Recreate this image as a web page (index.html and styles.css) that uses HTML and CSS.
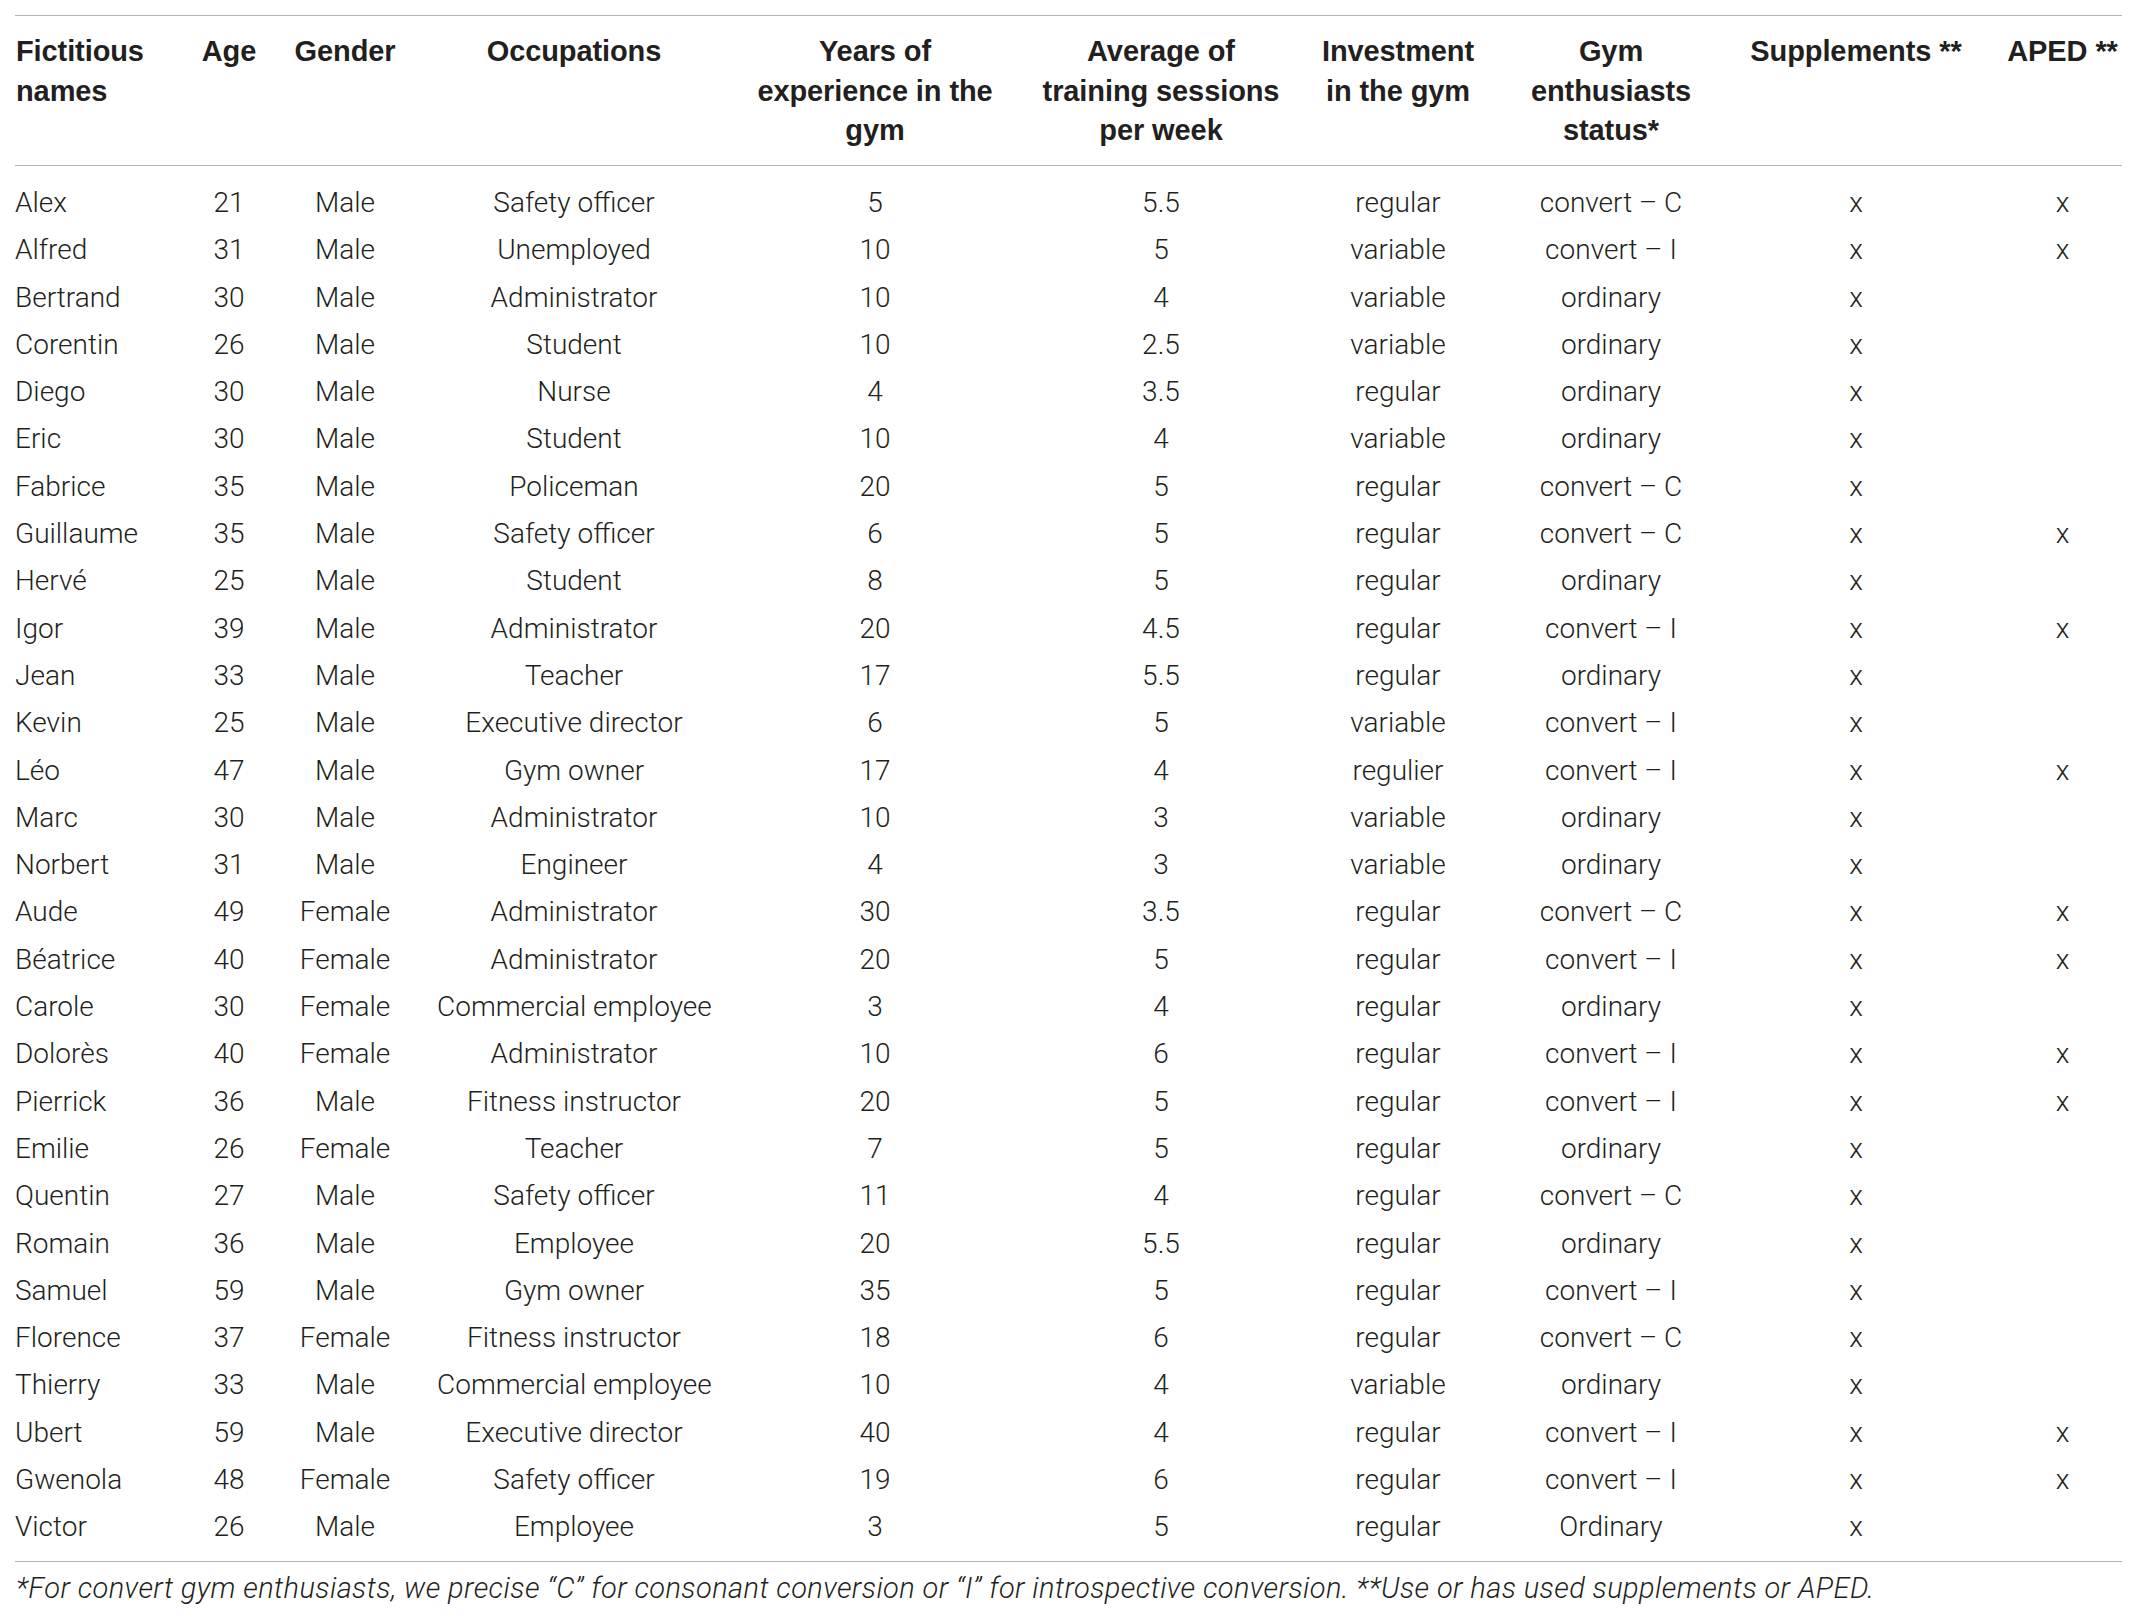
FILE: index.html
```html
<!DOCTYPE html>
<html lang="en">
<head>
<meta charset="utf-8">
<title>Participants</title>
<link rel="stylesheet" href="styles.css">
</head>
<body>
<div class="page">
<table class="data">
<colgroup>
<col class="c-name"><col class="c-age"><col class="c-gender"><col class="c-occ"><col class="c-years"><col class="c-avg"><col class="c-inv"><col class="c-status"><col class="c-supp"><col class="c-aped">
</colgroup>
<thead>
<tr>
<th class="left">Fictitious<br>names</th>
<th><div class="wide">Age</div></th>
<th>Gender</th>
<th>Occupations</th>
<th>Years of<br>experience in the<br>gym</th>
<th>Average of<br>training sessions<br>per week</th>
<th>Investment<br>in the gym</th>
<th>Gym<br>enthusiasts<br>status*</th>
<th>Supplements **</th>
<th>APED **</th>
</tr>
</thead>
<tbody>
<tr><td class="left">Alex</td><td>21</td><td>Male</td><td>Safety officer</td><td>5</td><td>5.5</td><td>regular</td><td>convert – C</td><td>x</td><td>x</td></tr>
<tr><td class="left">Alfred</td><td>31</td><td>Male</td><td>Unemployed</td><td>10</td><td>5</td><td>variable</td><td>convert – I</td><td>x</td><td>x</td></tr>
<tr><td class="left">Bertrand</td><td>30</td><td>Male</td><td>Administrator</td><td>10</td><td>4</td><td>variable</td><td>ordinary</td><td>x</td><td></td></tr>
<tr><td class="left">Corentin</td><td>26</td><td>Male</td><td>Student</td><td>10</td><td>2.5</td><td>variable</td><td>ordinary</td><td>x</td><td></td></tr>
<tr><td class="left">Diego</td><td>30</td><td>Male</td><td>Nurse</td><td>4</td><td>3.5</td><td>regular</td><td>ordinary</td><td>x</td><td></td></tr>
<tr><td class="left">Eric</td><td>30</td><td>Male</td><td>Student</td><td>10</td><td>4</td><td>variable</td><td>ordinary</td><td>x</td><td></td></tr>
<tr><td class="left">Fabrice</td><td>35</td><td>Male</td><td>Policeman</td><td>20</td><td>5</td><td>regular</td><td>convert – C</td><td>x</td><td></td></tr>
<tr><td class="left">Guillaume</td><td>35</td><td>Male</td><td>Safety officer</td><td>6</td><td>5</td><td>regular</td><td>convert – C</td><td>x</td><td>x</td></tr>
<tr><td class="left">Hervé</td><td>25</td><td>Male</td><td>Student</td><td>8</td><td>5</td><td>regular</td><td>ordinary</td><td>x</td><td></td></tr>
<tr><td class="left">Igor</td><td>39</td><td>Male</td><td>Administrator</td><td>20</td><td>4.5</td><td>regular</td><td>convert – I</td><td>x</td><td>x</td></tr>
<tr><td class="left">Jean</td><td>33</td><td>Male</td><td>Teacher</td><td>17</td><td>5.5</td><td>regular</td><td>ordinary</td><td>x</td><td></td></tr>
<tr><td class="left">Kevin</td><td>25</td><td>Male</td><td>Executive director</td><td>6</td><td>5</td><td>variable</td><td>convert – I</td><td>x</td><td></td></tr>
<tr><td class="left">Léo</td><td>47</td><td>Male</td><td>Gym owner</td><td>17</td><td>4</td><td>regulier</td><td>convert – I</td><td>x</td><td>x</td></tr>
<tr><td class="left">Marc</td><td>30</td><td>Male</td><td>Administrator</td><td>10</td><td>3</td><td>variable</td><td>ordinary</td><td>x</td><td></td></tr>
<tr><td class="left">Norbert</td><td>31</td><td>Male</td><td>Engineer</td><td>4</td><td>3</td><td>variable</td><td>ordinary</td><td>x</td><td></td></tr>
<tr><td class="left">Aude</td><td>49</td><td>Female</td><td>Administrator</td><td>30</td><td>3.5</td><td>regular</td><td>convert – C</td><td>x</td><td>x</td></tr>
<tr><td class="left">Béatrice</td><td>40</td><td>Female</td><td>Administrator</td><td>20</td><td>5</td><td>regular</td><td>convert – I</td><td>x</td><td>x</td></tr>
<tr><td class="left">Carole</td><td>30</td><td>Female</td><td>Commercial employee</td><td>3</td><td>4</td><td>regular</td><td>ordinary</td><td>x</td><td></td></tr>
<tr><td class="left">Dolorès</td><td>40</td><td>Female</td><td>Administrator</td><td>10</td><td>6</td><td>regular</td><td>convert – I</td><td>x</td><td>x</td></tr>
<tr><td class="left">Pierrick</td><td>36</td><td>Male</td><td>Fitness instructor</td><td>20</td><td>5</td><td>regular</td><td>convert – I</td><td>x</td><td>x</td></tr>
<tr><td class="left">Emilie</td><td>26</td><td>Female</td><td>Teacher</td><td>7</td><td>5</td><td>regular</td><td>ordinary</td><td>x</td><td></td></tr>
<tr><td class="left">Quentin</td><td>27</td><td>Male</td><td>Safety officer</td><td>11</td><td>4</td><td>regular</td><td>convert – C</td><td>x</td><td></td></tr>
<tr><td class="left">Romain</td><td>36</td><td>Male</td><td>Employee</td><td>20</td><td>5.5</td><td>regular</td><td>ordinary</td><td>x</td><td></td></tr>
<tr><td class="left">Samuel</td><td>59</td><td>Male</td><td>Gym owner</td><td>35</td><td>5</td><td>regular</td><td>convert – I</td><td>x</td><td></td></tr>
<tr><td class="left">Florence</td><td>37</td><td>Female</td><td>Fitness instructor</td><td>18</td><td>6</td><td>regular</td><td>convert – C</td><td>x</td><td></td></tr>
<tr><td class="left">Thierry</td><td>33</td><td>Male</td><td>Commercial employee</td><td>10</td><td>4</td><td>variable</td><td>ordinary</td><td>x</td><td></td></tr>
<tr><td class="left">Ubert</td><td>59</td><td>Male</td><td>Executive director</td><td>40</td><td>4</td><td>regular</td><td>convert – I</td><td>x</td><td>x</td></tr>
<tr><td class="left">Gwenola</td><td>48</td><td>Female</td><td>Safety officer</td><td>19</td><td>6</td><td>regular</td><td>convert – I</td><td>x</td><td>x</td></tr>
<tr><td class="left">Victor</td><td>26</td><td>Male</td><td>Employee</td><td>3</td><td>5</td><td>regular</td><td>Ordinary</td><td>x</td><td></td></tr>
</tbody>
</table>
<p class="note">*For convert gym enthusiasts, we precise “C” for consonant conversion or “I” for introspective conversion. **Use or has used supplements or APED.</p>
</div>
</body>
</html>
```
FILE: styles.css
```css
html, body {
  margin: 0;
  padding: 0;
  background: #ffffff;
}

.page {
  padding: 15px 0 0 15px;
  width: 2107px;
  color: #231f20;
}

.data {
  table-layout: fixed;
  border-collapse: collapse;
  width: 2107px;
  border-top: 1px solid #b4b4b4;
  border-bottom: 1px solid #b4b4b4;
}

.c-name { width: 190px; }
.c-age { width: 48px; }
.c-gender { width: 184px; }
.c-occ { width: 274px; }
.c-years { width: 328px; }
.c-avg { width: 244px; }
.c-inv { width: 230px; }
.c-status { width: 196px; }
.c-supp { width: 294px; }
.c-aped { width: 119px; }

.data thead tr {
  border-bottom: 1px solid #b4b4b4;
}

.data th {
  font-family: "Liberation Sans", Arial, sans-serif;
  font-weight: 700;
  font-size: 29px;
  line-height: 39.5px;
  text-align: center;
  vertical-align: top;
  white-space: nowrap;
  padding: 16px 0 14px 0;
  letter-spacing: -0.1px;
}

.data th.left {
  text-align: left;
  padding-left: 1px;
}

.wide {
  margin: 0 -12px;
}

.data td {
  font-family: Roboto, "Liberation Sans", sans-serif;
  font-weight: 300;
  font-size: 28px;
  line-height: 47.3px;
  text-align: center;
  white-space: nowrap;
  padding: 0;
  overflow: visible;
}

.data td.left {
  text-align: left;
}

.data tbody tr:first-child td {
  padding-top: 13.5px;
}

.data tbody tr:last-child td {
  padding-bottom: 10px;
}

.note {
  margin: 0;
  padding: 9px 0 0 1px;
  font-family: Roboto, "Liberation Sans", sans-serif;
  font-weight: 300;
  font-style: italic;
  font-size: 29px;
  line-height: 34px;
  letter-spacing: 0.4px;
  white-space: nowrap;
}
```
